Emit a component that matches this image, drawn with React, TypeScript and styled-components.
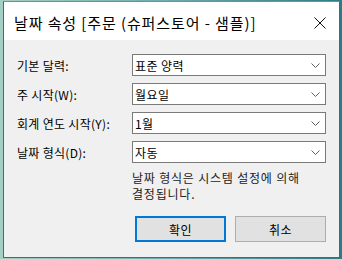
import styled, { createGlobalStyle } from "styled-components";

const GlobalStyle = createGlobalStyle`
  html, body {
    margin: 0;
    padding: 0;
  }
  body {
    width: 342px;
    height: 259px;
    overflow: hidden;
    background: linear-gradient(90deg, #a3cfc4 0%, #6fa9ad 50%, #2e7b88 100%);
    font-family: "Noto Sans CJK KR", "Noto Sans", sans-serif;
  }
`;

const fields = [
  { label: "기본 달력:", value: "표준 양력" },
  { label: "주 시작(W):", value: "월요일" },
  { label: "회계 연도 시작(Y):", value: "1월" },
  { label: "날짜 형식(D):", value: "자동" },
];

const Chevron = () => (
  <svg width="9" height="5" viewBox="0 0 9 5">
    <path d="M0.5 0.5 L4.5 4.5 L8.5 0.5" fill="none" stroke="#606060" strokeWidth="1" />
  </svg>
);

const CloseIcon = () => (
  <svg width="12" height="12" viewBox="0 0 12 12">
    <path d="M0.5 0.5 L11.5 11.5 M11.5 0.5 L0.5 11.5" stroke="#111" strokeWidth="1" />
  </svg>
);

const App = () => (
  <>
    <GlobalStyle />
    <Page>
      <Window>
        <TitleBar>
          <Title>날짜 속성 [주문 (슈퍼스토어 - 샘플)]</Title>
          <CloseIcon />
        </TitleBar>

        <Body>
          <Form>
            {fields.map((f) => (
              <Row key={f.label}>
                <Label>{f.label}</Label>
                <Select>
                  <span>{f.value}</span>
                  <Chevron />
                </Select>
              </Row>
            ))}
          </Form>

          <NoteRow>
            <Note>
              날짜 형식은 시스템 설정에 의해
              <br />
              결정됩니다.
            </Note>
          </NoteRow>

          <Buttons>
            <Button $primary>확인</Button>
            <Button>취소</Button>
          </Buttons>
        </Body>
      </Window>
    </Page>
  </>
);

const Page = styled.div`
  box-sizing: border-box;
  height: 259px;
  padding: 1px 2px 1px 3px;
  display: flex;
`;

const Window = styled.div`
  flex: 1;
  display: flex;
  flex-direction: column;
  border: 1px solid #5a6464;
  border-top-color: #7a8c8e;
`;

const TitleBar = styled.div`
  box-sizing: border-box;
  height: 38px;
  background: #fff;
  display: flex;
  align-items: center;
  justify-content: space-between;
  padding: 3px 13px 0 10px;
`;

const Title = styled.div`
  font-size: 15px;
  line-height: 18px;
  letter-spacing: 0.9px;
  color: #000;
`;

const Body = styled.div`
  flex: 1;
  background: #f0f0f0;
  padding: 14px 12px 0 13px;
  display: flex;
  flex-direction: column;
`;

const Form = styled.div`
  display: flex;
  flex-direction: column;
  gap: 7px;
`;

const Row = styled.div`
  display: grid;
  grid-template-columns: 115px 194px;
  align-items: center;
  height: 22px;
`;

const Label = styled.div`
  font-size: 12px;
  line-height: 15px;
  letter-spacing: 0.3px;
  color: #000;
  white-space: nowrap;
`;

const Select = styled.div`
  box-sizing: border-box;
  height: 22px;
  border: 1px solid #7a7a7a;
  background: #fff;
  display: flex;
  align-items: center;
  justify-content: space-between;
  padding: 0 5px 0 2px;
  font-size: 12px;
  line-height: 15px;
  letter-spacing: 0.4px;
  color: #000;
`;

const NoteRow = styled.div`
  display: grid;
  grid-template-columns: 115px 194px;
  margin-top: 7px;
`;

const Note = styled.div`
  grid-column: 2;
  font-size: 12px;
  line-height: 16px;
  letter-spacing: 0.8px;
  color: #222;
`;

const Buttons = styled.div`
  display: flex;
  justify-content: flex-end;
  gap: 9px;
  margin-top: 14px;
  width: 309px;
`;

const Button = styled.button<{ $primary?: boolean }>`
  box-sizing: border-box;
  width: 91px;
  height: 26px;
  padding: 0;
  background: #e1e1e1;
  border: ${(p) => (p.$primary ? "2px solid #0078d7" : "1px solid #adadad")};
  font-family: "Noto Sans CJK KR", "Noto Sans", sans-serif;
  font-size: 12px;
  line-height: 15px;
  letter-spacing: 0.4px;
  color: #000;
`;

export default App;
